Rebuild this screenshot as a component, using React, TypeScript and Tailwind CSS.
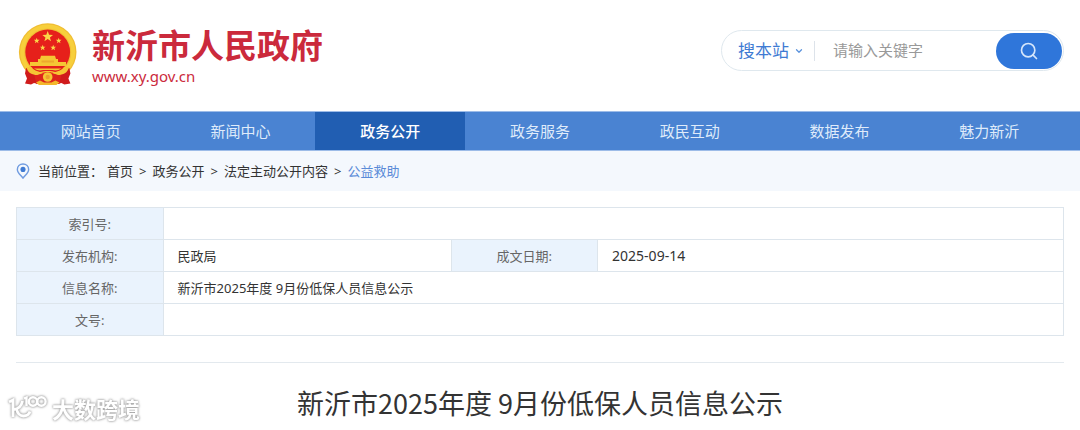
import { Search, ChevronDown } from "lucide-react";

const navItems = [
  { label: "网站首页", active: false },
  { label: "新闻中心", active: false },
  { label: "政务公开", active: true },
  { label: "政务服务", active: false },
  { label: "政民互动", active: false },
  { label: "数据发布", active: false },
  { label: "魅力新沂", active: false },
];

const crumbs = ["首页", "政务公开", "法定主动公开内容"];

const stars = [
  { x: 29.7, y: 14.7, r: 5.6 },
  { x: 18.7, y: 18.8, r: 3 },
  { x: 40.7, y: 18.8, r: 3 },
  { x: 24.7, y: 25.7, r: 3 },
  { x: 35.2, y: 25.7, r: 3 },
];

function starPoints(x: number, y: number, r: number) {
  return Array.from({ length: 10 }, (_, i) => {
    const a = (Math.PI / 5) * i - Math.PI / 2;
    const d = i % 2 ? r * 0.42 : r;
    return `${x + d * Math.cos(a)},${y + d * Math.sin(a)}`;
  }).join(" ");
}

function Emblem() {
  return (
    <svg viewBox="0 0 60 64" className="h-16 w-15 shrink-0" aria-hidden="true">
      {/* Wheat ring */}
      <circle cx="29.7" cy="30" r="28.8" fill="#f0bd33" />
      <circle cx="29.7" cy="30" r="25.5" fill="none" stroke="#f7cf3c" strokeWidth="4" />
      <circle cx="29.7" cy="30" r="22.4" fill="#e6201b" />
      {stars.map((s, i) => (
        <polygon key={i} points={starPoints(s.x, s.y, s.r)} fill="#fbd648" />
      ))}
      {/* Gate */}
      <path d="M23 33.700h14l1 3.300h2v3h8v4H12v-4h8v-3h2z" fill="#f5c634" />
      <path d="M23.500 38.500h12.500v2H23.500z" fill="#eda92c" />
      {/* Ribbons */}
      <path d="M8 46l10 4 2 12-4-1-3 1.500-6-1 2-5-2-5z" fill="#d01b1c" />
      <path d="M51.400 46l-10 4-2 12 4-1 3 1.500 6-1-2-5 2-5z" fill="#d01b1c" />
      <path d="M16 52h27.400l-2 10h-5l-6 1-6-1h-6z" fill="#dd241c" />
      <path
        d="M8.500 45h42.400c-1 6-6 8-11 8l-4-1.500c-2-2-10-2-12.500 0l-4 1.500c-5 0-10-2-10.900-8z"
        fill="#f5c634"
      />
      <path d="M13 44h33.400c-1 3-5 5-9 6-3-1.500-12-1.500-15.400 0-4-1-8-3-9-6z" fill="#e4201b" />
      <path d="M16 46.500h27.500c-3 2-6 2.500-9 1.500h-9.500c-3 1-6 .5-9-1.500z" fill="#f5c634" />
      {/* Gear */}
      <circle cx="29.7" cy="55" r="4.800" fill="#f5c634" />
      <circle cx="29.7" cy="55" r="2.200" fill="#ee9f2b" />
      <path d="M18 60.500l4-2 4 2h7.400l4-2 4 2-3 2.500H21z" fill="#f3b82b" />
    </svg>
  );
}

function LocationPin() {
  return (
    <svg viewBox="0 0 14 17" className="h-4 w-3.5 shrink-0" fill="none" aria-hidden="true">
      <path
        d="M7 1C3.600 1 1 3.500 1 6.800 1 10.600 5 13 7 16c2-3 6-5.400 6-9.200C13 3.500 10.400 1 7 1z"
        stroke="#6f9be0"
        strokeWidth="1.500"
      />
      <circle cx="7" cy="6.800" r="2.700" fill="#3f7bd3" />
    </svg>
  );
}

function Watermark() {
  return (
    <div className="absolute bottom-1 left-2 flex items-center gap-1 text-white [filter:drop-shadow(0_0_1px_#999)_drop-shadow(0_0_1px_#ccc)]">
      <svg viewBox="0 0 40 28" className="h-7 w-10" fill="none" stroke="currentColor" strokeWidth="2.800" aria-hidden="true">
        <path d="M1 7l4-2v17" />
        <path d="M14.500 6c-1 5-4 8-9 8.500" />
        <path d="M8.500 14c1 4.500 3.500 7 7 7 3 0 5.500-1.500 6.500-4.500" />
        <path d="M16 3.500l2.500-1V11" strokeWidth="2.400" />
        <circle cx="25" cy="6.500" r="4.200" strokeWidth="2.400" />
        <circle cx="33.400" cy="6.500" r="4.200" strokeWidth="2.400" />
      </svg>
      <span className="text-[22px] leading-8 font-bold">大数跨境</span>
    </div>
  );
}

const labelCell = "h-8 border border-[#dde5ec] bg-[#eaf3fd] text-center font-normal text-[#666]";
const valueCell = "h-8 border border-[#dde5ec] px-3.5 text-[#333]";

export default function App() {
  return (
    <div className="relative bg-white pb-2 font-['Noto_Sans','Noto_Sans_CJK_SC',sans-serif] text-[#333]">
      <header className="flex items-start justify-between pt-[22px] pr-4 pb-[25px] pl-[18px]">
        <a href="#" className="flex items-center gap-3.5 text-[#cb2a3c]">
          <Emblem />
          <span className="flex flex-col pt-1">
            <span className="text-[33px] leading-10 font-bold">新沂市人民政府</span>
            <span className="text-[15px] leading-5">www.xy.gov.cn</span>
          </span>
        </a>

        <form className="mt-2 flex h-[41px] items-center rounded-full border border-[#dfe8ee] pr-px pl-4" onSubmit={(e) => e.preventDefault()}>
          <label className="relative flex items-center border-r border-[#dde3ea] pr-2.5">
            <select aria-label="搜索范围" className="w-[66px] appearance-none bg-transparent text-[17px] leading-5 text-[#3f7bd3] outline-none">
              <option>搜本站</option>
            </select>
            <ChevronDown className="pointer-events-none absolute right-2.5 size-2.5 text-[#5b93dd]" strokeWidth={3} />
          </label>
          <input
            type="text"
            aria-label="关键字"
            placeholder="请输入关键字"
            className="w-[181px] bg-transparent pl-[18px] text-[15px] outline-none placeholder:text-[#999]"
          />
          <button type="submit" aria-label="搜索" className="flex h-9 w-[66px] items-center justify-center rounded-full bg-[#2f76da] text-[#d5e6fb]">
            <Search className="size-5" strokeWidth={2} />
          </button>
        </form>
      </header>

      <nav className="grid grid-cols-7 border-y border-[#9dbce8] bg-[#4a83d2] px-4">
        {navItems.map((item) => (
          <a
            key={item.label}
            href="#"
            className={
              item.active
                ? "bg-[#215eb2] text-center text-[15px] leading-[38px] font-medium text-white"
                : "text-center text-[15px] leading-[38px] text-[#dfebfa]"
            }
          >
            {item.label}
          </a>
        ))}
      </nav>

      <div className="flex items-center bg-[#f4f8fd] px-4 py-2.5 text-[13px] leading-5">
        <LocationPin />
        <span className="mr-1 ml-2">当前位置：</span>
        {crumbs.map((c) => (
          <span key={c}>
            <a href="#">{c}</a>
            <span className="mx-1.5">&gt;</span>
          </span>
        ))}
        <a href="#" className="text-[#5a8bd8]">
          公益救助
        </a>
      </div>

      <main className="px-4 pt-4">
        <table className="w-full table-fixed border-collapse text-[13px] leading-5">
          <colgroup>
            <col className="w-[14%]" />
            <col className="w-[27.5%]" />
            <col className="w-[14%]" />
            <col />
          </colgroup>
          <tbody>
            <tr>
              <th scope="row" className={labelCell}>索引号:</th>
              <td colSpan={3} className={valueCell} />
            </tr>
            <tr>
              <th scope="row" className={labelCell}>发布机构:</th>
              <td className={valueCell}>民政局</td>
              <th scope="row" className={labelCell}>成文日期:</th>
              <td className={`${valueCell} text-sm`}>2025-09-14</td>
            </tr>
            <tr>
              <th scope="row" className={labelCell}>信息名称:</th>
              <td colSpan={3} className={valueCell}>新沂市2025年度 9月份低保人员信息公示</td>
            </tr>
            <tr>
              <th scope="row" className={labelCell}>文号:</th>
              <td colSpan={3} className={valueCell} />
            </tr>
          </tbody>
        </table>

        <h1 className="mt-[26px] border-t border-[#e3e9ee] pt-[22px] text-center font-['Noto_Sans_CJK_SC',sans-serif] text-[27px] leading-9">
          新沂市2025年度 9月份低保人员信息公示
        </h1>
      </main>

      <Watermark />
    </div>
  );
}
